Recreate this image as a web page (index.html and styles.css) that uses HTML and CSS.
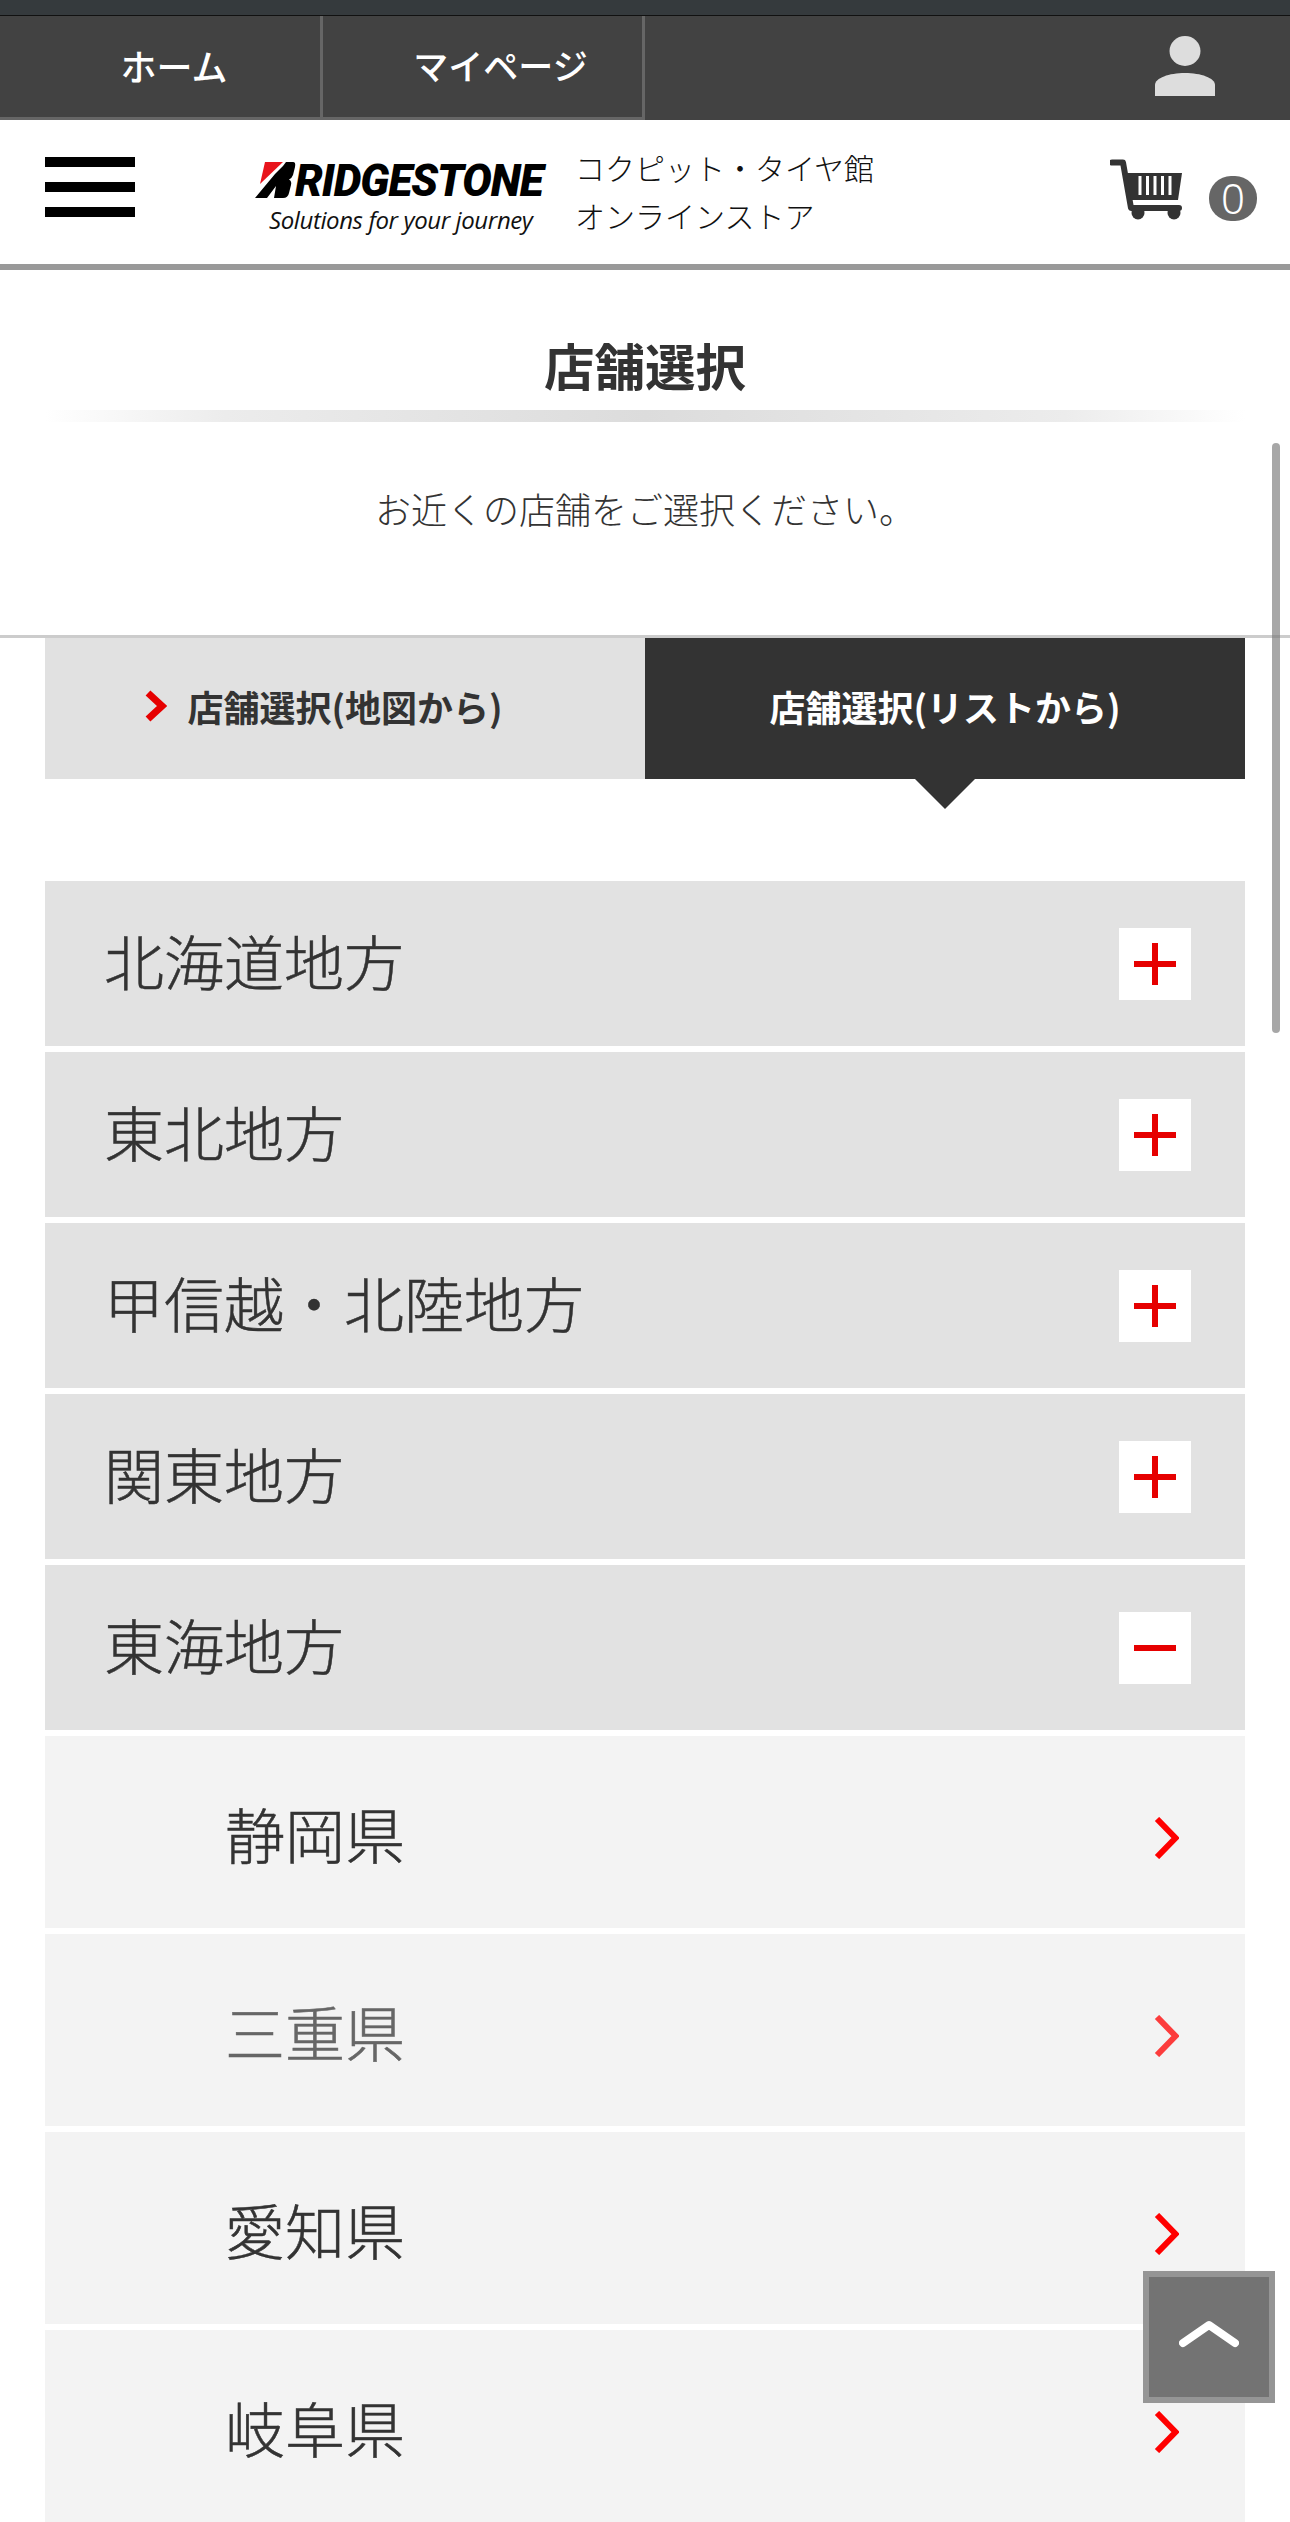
FILE: index.html
```html
<!DOCTYPE html>
<html lang="ja">
<head>
<meta charset="utf-8">
<title>店舗選択</title>
<link rel="stylesheet" href="styles.css">
</head>
<body>
<div class="page">
  <div class="status"></div>
  <nav class="topnav">
    <a class="topnav-item topnav-item-first">ホーム</a>
    <a class="topnav-item topnav-item-second">マイページ</a>
    <svg class="user-icon" width="60" height="60" viewBox="0 0 60 60"><ellipse cx="30" cy="15" rx="15.5" ry="15" fill="#ddd"/><path d="M0 60V49C0 42 14 37 30 37S60 42 60 49V60Z" fill="#ddd"/></svg>
  </nav>
  <header class="site-header">
    <div class="burger"><span></span><span></span><span></span></div>
    <div class="logo">
      <div class="logo-main">
        <svg class="logo-mark" width="41" height="36" viewBox="0 0 41 36"><path d="M10 0H28L5 22Z" fill="#e8141c"/><path d="M0 36L20 12L28 4L31 0H38Q41 0 40 5L38 13Q37 16 34 17.500Q37 19 36 23L34 31Q33 36 28 36H19L21 24L12 36Z" fill="#000"/></svg>
        <span class="logo-word">RIDGESTONE</span>
      </div>
      <div class="logo-tag">Solutions for your journey</div>
    </div>
    <div class="shop-name">コクピット・タイヤ館<br>オンラインストア</div>
    <svg class="cart" width="72" height="61" viewBox="0 0 72 61">
      <path d="M2 3.500H13L21 49H69" fill="none" stroke="#333" stroke-width="6" stroke-linecap="round" stroke-linejoin="round"/>
      <path d="M17 14H72L68 41H21Z" fill="#333"/>
      <path d="M30 17V36M37.500 17V36M45 17V36M52.500 17V36M60 17V36" stroke="#fff" stroke-width="3"/>
      <circle cx="28" cy="54" r="6.500" fill="#333"/><circle cx="64" cy="54" r="6.500" fill="#333"/>
    </svg>
    <span class="cart-count">0</span>
  </header>
  <h1 class="title">店舗選択</h1>
  <div class="title-bar"></div>
  <p class="intro">お近くの店舗をご選択ください。</p>
  <div class="tabs">
    <a class="tab tab-map">
      <svg class="tab-chevron" width="22" height="32" viewBox="0 0 22 32"><path d="M3 3L17 16L3 29" fill="none" stroke="#e60000" stroke-width="7"/></svg>店舗選択(地図から)
    </a>
    <a class="tab tab-list">店舗選択(リストから)</a>
  </div>
  <ul class="regions">
    <li class="region"><span>北海道地方</span><svg class="toggle" width="72" height="72" viewBox="0 0 72 72"><rect width="72" height="72" fill="#fff"/><path d="M15 36H57M36 15V57" stroke="#e60000" stroke-width="6"/></svg></li>
    <li class="region"><span>東北地方</span><svg class="toggle" width="72" height="72" viewBox="0 0 72 72"><rect width="72" height="72" fill="#fff"/><path d="M15 36H57M36 15V57" stroke="#e60000" stroke-width="6"/></svg></li>
    <li class="region"><span>甲信越・北陸地方</span><svg class="toggle" width="72" height="72" viewBox="0 0 72 72"><rect width="72" height="72" fill="#fff"/><path d="M15 36H57M36 15V57" stroke="#e60000" stroke-width="6"/></svg></li>
    <li class="region"><span>関東地方</span><svg class="toggle" width="72" height="72" viewBox="0 0 72 72"><rect width="72" height="72" fill="#fff"/><path d="M15 36H57M36 15V57" stroke="#e60000" stroke-width="6"/></svg></li>
    <li class="region"><span>東海地方</span><svg class="toggle" width="72" height="72" viewBox="0 0 72 72"><rect width="72" height="72" fill="#fff"/><path d="M15 36H57" stroke="#e60000" stroke-width="6"/></svg></li>
    <li class="pref"><span>静岡県</span><svg class="chevron" width="25" height="42" viewBox="0 0 25 42"><path d="M3 2L21.500 21L3 40" fill="none" stroke="#f00" stroke-width="6"/></svg></li>
    <li class="pref pref-hover"><span>三重県</span><svg class="chevron" width="25" height="42" viewBox="0 0 25 42"><path d="M3 2L21.500 21L3 40" fill="none" stroke="#f00" stroke-width="6"/></svg></li>
    <li class="pref"><span>愛知県</span><svg class="chevron" width="25" height="42" viewBox="0 0 25 42"><path d="M3 2L21.500 21L3 40" fill="none" stroke="#f00" stroke-width="6"/></svg></li>
    <li class="pref"><span>岐阜県</span><svg class="chevron" width="25" height="42" viewBox="0 0 25 42"><path d="M3 2L21.500 21L3 40" fill="none" stroke="#f00" stroke-width="6"/></svg></li>
  </ul>
  <div class="scrollbar"></div>
  <a class="to-top"><svg width="60" height="28" viewBox="0 0 60 28"><path d="M4 23L30 5L56 23" fill="none" stroke="#fff" stroke-width="8" stroke-linecap="round" stroke-linejoin="round"/></svg></a>
</div>
</body>
</html>
```
FILE: styles.css
```css
* { box-sizing: border-box; }
html, body { margin: 0; padding: 0; background: #fff; }
.page {
  position: relative;
  width: 1290px;
  height: 2522px;
  overflow: hidden;
  font-family: "Noto Sans CJK JP", "Noto Sans", sans-serif;
  color: #333;
}
.status { height: 16px; background: #353a3d; border-bottom: 1px solid #111; }
.topnav {
  display: flex;
  align-items: stretch;
  height: 104px;
  background: #424242;
  position: relative;
}
.topnav-item {
  display: flex;
  align-items: center;
  justify-content: center;
  padding-bottom: 4px;
  font-size: 36px;
  font-weight: 500;
  color: #fff;
  border-right: 3px solid #666;
  border-bottom: 3px solid #666;
}
.topnav-item-first { width: 323px; padding-left: 28px; }
.topnav-item-second { width: 322px; padding-left: 36px; font-size: 35px; }
.user-icon { position: absolute; left: 1155px; top: 20px; }
.site-header {
  display: flex;
  align-items: center;
  height: 150px;
  border-bottom: 6px solid #999;
  padding-left: 45px;
}
.burger { width: 90px; height: 60px; display: flex; flex-direction: column; justify-content: space-between; margin-top: -10px; }
.burger span { display: block; height: 10px; background: #000; }
.logo { width: 300px; margin-left: 120px; margin-top: 12px; }
.logo-main { display: flex; align-items: flex-end; height: 36px; white-space: nowrap; }
.logo-mark { flex: none; }
.logo-word {
  font-family: Roboto, "Liberation Sans", sans-serif;
  font-weight: 900;
  font-style: italic;
  font-size: 44px;
  line-height: 34px;
  letter-spacing: -1px;
  color: #000;
  margin-left: -1px;
}
.logo-tag {
  font-family: "Open Sans", "Liberation Sans", sans-serif;
  font-style: italic;
  font-size: 24px;
  line-height: 30px;
  margin-top: 7px;
  margin-left: 14px;
  letter-spacing: -0.400px;
  color: #111;
  white-space: nowrap;
}
.shop-name { margin-left: 20px; width: 535px; font-size: 30px; line-height: 48px; color: #111; margin-top: -3px; font-weight: 300; }
.cart { margin-left: 0; flex: none; margin-top: -6px; margin-right: 27px; }
.cart-count {
  width: 48px;
  height: 45px;
  border-radius: 22px;
  background: #666;
  color: #fff;
  font-family: "Noto Sans", sans-serif;
  font-weight: 300;
  font-size: 42px;
  line-height: 44px;
  text-align: center;
  margin-top: 12px;
}
.title { margin: 0; height: 140px; padding-top: 63px; text-align: center; font-size: 50.500px; line-height: 62px; font-weight: 700; color: #333; }
.title-bar { height: 12px; margin: 0 45px; background: linear-gradient(to right, rgba(225,225,225,0), #ececec 15%, #dcdcdc 50%, #ececec 85%, rgba(225,225,225,0)); }
.intro { margin: 0; height: 216px; padding-top: 61px; border-bottom: 3px solid #ccc; text-align: center; font-size: 36px; line-height: 50px; font-weight: 300; color: #333; }
.tabs { display: flex; margin: 0 45px 102px; height: 141px; }
.tab { flex: 0 0 600px; display: flex; align-items: center; justify-content: center; font-size: 36px; font-weight: 700; padding-bottom: 6px; }
.tab-map { background: #e1e1e1; color: #333; padding-right: 42px; }
.tab-chevron { margin-right: 20px; }
.tab-list { background: #333; color: #fff; position: relative; }
.tab-list::after {
  content: "";
  position: absolute;
  left: 50%;
  top: 100%;
  margin-left: -30px;
  border-style: solid;
  border-width: 30px 30px 0;
  border-color: #333 transparent transparent;
}
.regions { list-style: none; margin: 0 45px; padding: 0; display: flex; flex-direction: column; gap: 6px; }
.region { display: flex; align-items: center; justify-content: space-between; height: 165px; background: #e2e2e2; padding: 0 54px 0 59px; font-size: 60px; line-height: 80px; font-weight: 300; }
.region span { margin-top: -8px; -webkit-text-stroke: 0.5px currentColor; }
.pref { display: flex; align-items: center; justify-content: space-between; height: 192px; background: #f3f3f3; padding: 12px 66px 0 180px; font-size: 60px; line-height: 80px; font-weight: 300; }
.pref span { margin-top: -10px; -webkit-text-stroke: 0.5px currentColor; }
.pref-hover span { color: #666; }
.pref-hover .chevron { opacity: 0.75; }
.toggle, .chevron { flex: none; }
.scrollbar { position: absolute; left: 1272px; top: 443px; width: 8px; height: 590px; border-radius: 4px; background: rgba(120,120,120,0.65); }
.to-top {
  position: absolute;
  left: 1143px;
  top: 2271px;
  width: 132px;
  height: 132px;
  background: #737373;
  border: 6px solid #959595;
  display: flex;
  align-items: center;
  justify-content: center;
  padding-bottom: 6px;
}
```
